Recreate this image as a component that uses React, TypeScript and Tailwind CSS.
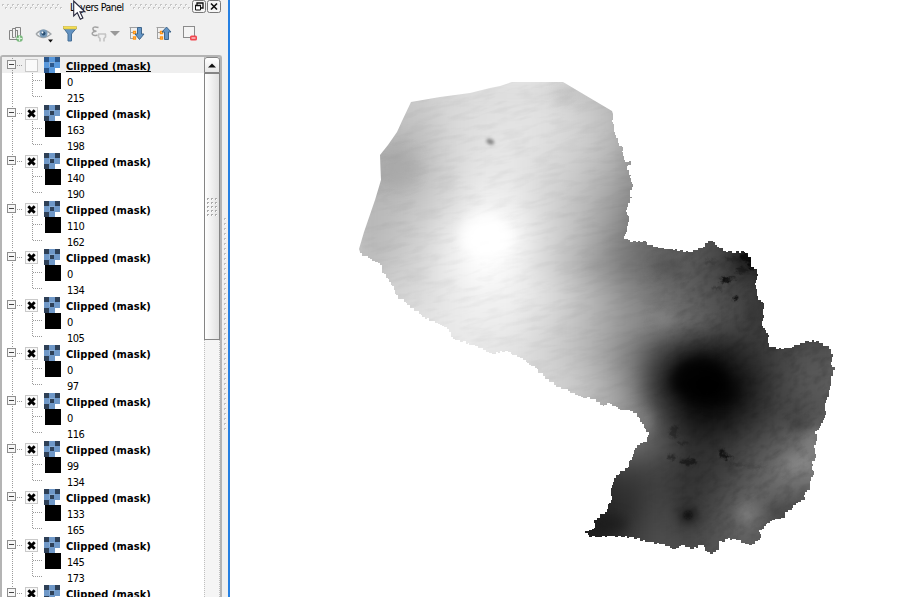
import React from "react";

const layers: [number, number][] = [
  [0, 215], [163, 198], [140, 190], [110, 162], [0, 134], [0, 105],
  [0, 97], [0, 116], [99, 134], [133, 165], [145, 173],
];

// Elevation samples, 30px apart, starting at (360, 85).
const terrain: number[][] = [
  [200, 200, 205, 214, 219, 221, 218, 198, 186, 170, 150, 130, 100, 80, 70, 70, 70],
  [195, 195, 199, 216, 223, 226, 226, 215, 196, 172, 150, 130, 100, 80, 70, 70, 70],
  [180, 176, 188, 214, 226, 230, 224, 212, 195, 163, 140, 120, 100, 80, 70, 70, 70],
  [172, 168, 186, 213, 231, 232, 219, 205, 184, 152, 130, 110, 90, 80, 70, 70, 70],
  [183, 187, 199, 218, 242, 240, 219, 198, 172, 137, 112, 100, 85, 60, 60, 60, 60],
  [181, 190, 208, 235, 255, 255, 224, 197, 162, 122, 100, 92, 76, 40, 40, 60, 60],
  [185, 198, 214, 238, 255, 248, 220, 188, 150, 116, 96, 88, 68, 38, 30, 60, 60],
  [203, 210, 217, 232, 243, 241, 228, 204, 173, 140, 114, 98, 78, 68, 52, 40, 60],
  [218, 220, 226, 233, 237, 235, 220, 198, 173, 146, 126, 104, 80, 66, 58, 58, 60],
  [218, 218, 223, 228, 231, 226, 214, 196, 168, 126, 64, 24, 20, 46, 67, 86, 82],
  [218, 218, 223, 228, 231, 226, 214, 206, 182, 137, 36, 0, 0, 26, 68, 90, 92],
  [210, 210, 210, 210, 210, 210, 208, 195, 174, 156, 70, 16, 14, 40, 68, 76, 90],
  [180, 180, 180, 180, 160, 150, 140, 120, 100, 110, 88, 46, 48, 72, 94, 128, 130],
  [60, 60, 60, 60, 60, 60, 60, 60, 54, 57, 64, 50, 60, 85, 120, 127, 120],
  [40, 40, 40, 40, 40, 40, 40, 40, 38, 45, 71, 48, 76, 108, 84, 76, 80],
  [30, 30, 30, 30, 30, 30, 30, 30, 30, 58, 78, 67, 85, 103, 75, 70, 70],
  [40, 40, 40, 40, 40, 40, 40, 40, 40, 70, 80, 80, 85, 90, 75, 70, 70],
];

const smoothEdge = "359,249 364,232 375,200 381,180 380,155 388,145 397,132 402,121 411,102 440,97 470,93 490,88 500,86 512,82 563,82 590,98 612,111";
const roughEdge =
  "613,114 612,122 615,135 616,138 619,146 622,147 623,156 625,162 629,161 631,165 627,169 631,176 632,190 630,197 632,198 628,207 626,212 629,222 627,229 624,239 630,242 643,241 647,245 658,248 670,249 688,252 693,250 702,248 708,241 713,240 717,247 726,252 744,252 751,260 751,267 757,271 757,280 755,285 758,300 763,303 763,315 763,328 768,335 769,347 776,349 790,348 800,343 812,340 822,343 831,350 833,357 831,365 835,370 831,378 830,390 825,408 825,418 820,428 815,434 817,441 814,448 816,458 812,464 814,475 810,483 810,490 804,497 805,500 796,505 792,510 785,513 785,518 775,520 767,524 764,529 759,532 760,540 752,545 745,543 741,540 728,539 719,544 719,550 713,554 707,551 704,545 694,549 685,545 676,549 665,544 650,542 632,537 610,536 590,537 585,531 594,528 594,520 605,512 611,500 612,485 616,475 628,467 632,457 634,450 640,443 647,440 649,432 642,422 637,413 630,410 622,410 610,403 604,406 600,402 590,397 583,397 570,391 556,385 545,376 537,368 520,357 508,351 492,353 475,345 455,339 447,327 425,317 410,305 396,294 391,282 382,270 382,265 372,259 360,252";

// Breaks the border into small pixel steps, as the raster cells do.
function roughen(list: string) {
  const pts = list.split(" ").map((p) => p.split(",").map(Number));
  const out: string[] = [];
  let prev = pts[0];
  const step = (x: number, y: number) => {
    out.push(`${x},${prev[1]}`, `${x},${y}`);
    prev = [x, y];
  };
  pts.forEach(([x, y], i) => {
    step(x, y);
    const next = pts[i + 1];
    if (!next) return;
    const dx = next[0] - x;
    const dy = next[1] - y;
    const n = Math.floor(Math.hypot(dx, dy) / 2.6);
    for (let k = 1; k < n; k++) {
      const a = Math.sin(i * 12.9 + k * 7.3) * 0.9;
      const b = Math.cos(i * 5.7 + k * 9.1) * 0.9;
      step(Math.round(x + (dx * k) / n + a), Math.round(y + (dy * k) / n + b));
    }
  });
  return out.join(" ");
}

const outline = `${smoothEdge} ${roughen(roughEdge)}`;

// cx, cy, rx, ry, gray, opacity
const softSpots: number[][] = [
  [486, 237, 26, 24, 255, 0.9], [400, 167, 18, 20, 163, 0.4], [566, 95, 9, 6, 180, 0.5],
  [699, 379, 28, 21, 0, 0.8], [722, 393, 18, 14, 0, 0.5], [664, 319, 10, 5, 155, 0.5],
  [799, 424, 9, 7, 42, 0.55], [744, 261, 12, 7, 20, 0.65], [610, 524, 18, 9, 22, 0.6],
  [647, 421, 5, 12, 155, 0.5], [780, 512, 10, 5, 50, 0.5], [668, 267, 15, 7, 78, 0.5],
  [753, 312, 6, 16, 40, 0.5], [690, 318, 30, 2, 125, 0.4], [812, 440, 5, 8, 145, 0.6],
  [796, 463, 15, 6, 160, 0.45], [747, 514, 9, 9, 155, 0.5], [688, 516, 7, 6, 0, 0.9],
];
const darkMarks: number[][] = [
  [725, 280, 4, 3, 10, 0.9], [732, 278, 4, 1.5, 20, 0.7],
  [735, 298, 2.5, 2, 5, 0.9], [746, 257, 6, 4, 5, 0.8], [742, 270, 6, 3, 18, 0.65],
  [733, 259, 8, 1.5, 30, 0.6], [722, 453, 3, 4, 10, 0.8], [727, 457, 4, 2, 8, 0.8],
  [689, 462, 9, 3, 10, 0.6], [671, 457, 4, 2, 15, 0.5], [712, 262, 8, 2, 55, 0.6],
  [755, 467, 9, 2, 65, 0.5], [674, 432, 4, 7, 15, 0.4], [683, 443, 6, 2, 20, 0.4],
  [717, 288, 6, 1.5, 35, 0.6], [736, 464, 8, 1.5, 40, 0.5], [751, 264, 3, 5, 0, 0.8],
];

const gray = (v: number) => `rgb(${v},${v},${v})`;

function ElevationMap() {
  return (
    <svg width="679" height="597" viewBox="230 0 679 597" className="block">
      <defs>
        <clipPath id="country">
          <polygon points={outline} shapeRendering="crispEdges" />
        </clipPath>
        <filter id="wide" filterUnits="userSpaceOnUse" x="280" y="10" width="640" height="640" colorInterpolationFilters="sRGB">
          <feGaussianBlur stdDeviation="13" />
        </filter>
        <filter id="spot" filterUnits="userSpaceOnUse" x="280" y="10" width="640" height="640" colorInterpolationFilters="sRGB">
          <feGaussianBlur stdDeviation="6" />
        </filter>
        <filter id="mark" filterUnits="userSpaceOnUse" x="280" y="10" width="640" height="640" colorInterpolationFilters="sRGB">
          <feGaussianBlur stdDeviation="1.3" result="b" />
          <feTurbulence type="fractalNoise" baseFrequency="0.25" numOctaves="2" seed="4" result="n" />
          <feDisplacementMap in="b" in2="n" scale="7" xChannelSelector="R" yChannelSelector="G" />
        </filter>
        <filter id="soft" x="-1" y="-1" width="3" height="3">
          <feGaussianBlur stdDeviation="1.5" />
        </filter>
        <filter id="relief" x="0" y="0" width="1" height="1" colorInterpolationFilters="sRGB">
          <feTurbulence type="fractalNoise" baseFrequency="0.04 0.18" numOctaves="3" seed="9" />
          <feColorMatrix values="0 0 0 0 0  0 0 0 0 0  0 0 0 0 0  1 0 0 0 -0.42" />
        </filter>
        <filter id="hills" filterUnits="userSpaceOnUse" x="480" y="180" width="520" height="440" colorInterpolationFilters="sRGB">
          <feGaussianBlur in="SourceAlpha" stdDeviation="18" result="area" />
          <feTurbulence type="fractalNoise" baseFrequency="0.09 0.16" numOctaves="4" seed="3" />
          <feColorMatrix values="0 0 0 0 0  0 0 0 0 0  0 0 0 0 0  2 0 0 0 -0.85" />
          <feComposite in2="area" operator="in" />
        </filter>
      </defs>
      <g clipPath="url(#country)">
        <g filter="url(#wide)">
          {terrain.map((row, j) =>
            row.map((v, i) => (
              <rect key={`${i}-${j}`} x={345 + i * 30} y={70 + j * 30} width="30.5" height="30.5" fill={gray(v)} shapeRendering="crispEdges" />
            )),
          )}
        </g>
        <g transform="rotate(-12 500 240)">
          <rect x="320" y="50" width="360" height="400" filter="url(#relief)" opacity="0.09" />
        </g>
        <g transform="rotate(-35 740 400)" opacity="0.16">
          <g filter="url(#hills)">
            <polygon transform="rotate(35 740 400)" points="650,245 760,245 860,340 850,480 720,560 660,500 690,380" />
          </g>
        </g>
        <g filter="url(#spot)">
          {softSpots.map(([cx, cy, rx, ry, v, o], i) => (
            <ellipse key={i} cx={cx} cy={cy} rx={rx} ry={ry} fill={gray(v)} opacity={o} />
          ))}
        </g>
        <ellipse cx="490.500" cy="141.500" rx="4" ry="2.800" transform="rotate(25 490 141)" fill="#888" filter="url(#soft)" />
        <circle cx="688" cy="515" r="4" fill="#080808" filter="url(#soft)" opacity=".6" />
        <g filter="url(#mark)">
          {darkMarks.map(([cx, cy, rx, ry, v, o], i) => (
            <ellipse key={i} cx={cx} cy={cy} rx={rx} ry={ry} fill={gray(v)} opacity={o} />
          ))}
        </g>
      </g>
    </svg>
  );
}

function Grip({ className }: { className: string }) {
  return (
    <svg className={className} height="7">
      <defs>
        <pattern id="grip" width="5" height="7" patternUnits="userSpaceOnUse">
          <path d="M0 1h2v1H1v1H0zM3 4h2v1H4v1H3z" fill="#c6c6c6" />
          <path d="M1 2h1v1H1zM4 5h1v1H4z" fill="#fff" />
        </pattern>
      </defs>
      <rect width="100%" height="7" fill="url(#grip)" />
    </svg>
  );
}

function TitleBar() {
  return (
    <div className="flex h-[15px] shrink-0 items-start pl-[2px]">
      <Grip className="mt-[3px] w-[60px]" />
      <span className="ml-[8px] w-[55px] whitespace-nowrap text-[10.5px] leading-[15px] tracking-[-0.5px]">Layers Panel</span>
      <Grip className="ml-[5px] mt-[3px] w-[60px]" />
      <svg className="ml-[2px]" width="30" height="14" fill="none">
        <rect x=".5" y=".5" width="13" height="12" rx="2" fill="#f6f6f6" stroke="#777" />
        <path d="M5 5V3h6v5H9" stroke="#111" strokeWidth="1.3" />
        <path d="M3.5 5.5h5v4.5h-5z" fill="#fff" stroke="#111" />
        <path d="M3 5.5h6" stroke="#111" strokeWidth="1.5" />
        <rect x="15.5" y=".5" width="13" height="12" rx="2" fill="#f6f6f6" stroke="#777" />
        <path d="M19 3.5l6 6m0-6l-6 6" stroke="#111" strokeWidth="1.6" />
      </svg>
    </div>
  );
}

function SortIcon({ up }: { up?: boolean }) {
  return (
    <svg width="16" height="16" viewBox="0 0 16 16" fill="none">
      <path d="M.5 1.500h8M1.500 2v11M1.500 6.500h3M1.500 12.500h3" stroke="#a0a0a0" />
      <path d="M4.500 5.500h2v2h-2zM4.500 11h2v2h-2z" fill="#fff" stroke="#ff9514" strokeWidth="1.3" />
      <path
        d={up ? "M10.500 1L15 6h-2.500v7.500h-4V6H6z" : "M8.500 1.500h4V8H15l-4.500 5.500L6 8h2.500z"}
        fill="#6495c5" stroke="#345b82" strokeWidth=".9"
      />
    </svg>
  );
}

function Toolbar() {
  return (
    <div className="flex h-[40px] shrink-0 items-start pl-[8px] pt-[11px]">
      <svg width="16" height="17" fill="none">
        <path d="M4.500 4.500h-3v9h8v-9h-2M6.500 11.500h-2v-9h3M7.500 11.500v-10h5v8M9.500 4v6" stroke="#858585" />
        <path d="M11.500 9.500v6M8.500 12.500h6" stroke="#58a85e" strokeWidth="4" />
        <path d="M11.500 10v5M9 12.500h5" stroke="#d9f0d9" strokeWidth="1.5" />
      </svg>
      <svg className="ml-[11px]" width="20" height="19">
        <path d="M1 8Q8 .5 16 8Q8 15 1 8" fill="#f7f9fa" stroke="#a1a6aa" strokeWidth="1.3" />
        <circle cx="8.500" cy="7.500" r="4" fill="#7799b8" />
        <circle cx="8.500" cy="7.500" r="2" fill="#294f73" />
        <circle cx="7.500" cy="6.500" r=".9" fill="#fff" />
        <path d="M13 13.500h5l-2.500 3z" fill="#111" />
      </svg>
      <svg className="ml-[8px]" width="15" height="17">
        <path d="M.5 2h13l-5 6v7H5V8z" fill="#6292c1" stroke="#456e96" />
        <rect x=".5" y=".5" width="13" height="2.500" fill="#f5df52" stroke="#cbb63e" strokeWidth=".6" />
      </svg>
      <svg className="ml-[13px]" width="16" height="17" fill="none">
        <path d="M7.500 1.500Q1.500 0 2 3Q2 5.200 5.500 5.200Q1 5.500 1.200 8Q2.500 10.500 6.500 9" stroke="#a2a2a2" strokeWidth="1.5" />
        <path d="M7.500 8v3l1.500 1.500v3M14.500 8v3L13 12.500v3M7 8h8" stroke="#c3c3c3" strokeWidth="1.600" />
      </svg>
      <svg className="ml-[3px] mt-[5px]" width="10" height="6"><path d="M0 0h10L5 5z" fill="#999" /></svg>
      <div className="ml-[9px]"><SortIcon /></div>
      <div className="ml-[11px]"><SortIcon up /></div>
      <svg className="ml-[10px]" width="16" height="17">
        <rect x="1.500" y=".5" width="11" height="11" fill="#f4f4f4" stroke="#8b8b8b" />
        <rect x="8" y="9.500" width="7" height="5" rx="1.500" fill="#f04850" />
        <path d="M9.500 12h4" stroke="#fff" />
      </svg>
    </div>
  );
}

function RasterIcon({ bright }: { bright: boolean }) {
  const d = bright ? "#2b578c" : "#2e4057";
  const b = bright ? "#5898dc" : "#6f98c8";
  return (
    <svg width="16" height="16" shapeRendering="crispEdges">
      <rect width="16" height="16" fill={b} />
      <path d={"M0 0h5v5H0zM11 0h5v5h-5zM6 6h4v4H6zM0 11h5v5H0z"} fill={d} />
      <path d="M5 5h6v1H6v4H5z" fill="#8aaed6" />
      <path d="M11 11h5v5h-5z" fill="#fff" />
    </svg>
  );
}

function LayerHeader({ first }: { first: boolean }) {
  return (
    <div className={`flex h-[16px] shrink-0 ${first ? "bg-[#efefef]" : ""}`}>
      <svg width="22" height="16" fill="none" shapeRendering="crispEdges">
        <path d="M10.500 1v15" stroke="#9b9b9b" strokeDasharray="1 1" />
        <path d="M15 8.500h6" stroke="#9b9b9b" strokeDasharray="1 1" />
        <rect x="5.500" y="3.500" width="8" height="8" fill="#f7f7f7" stroke="#8e8e8e" />
        <path d="M7 7.500h5" stroke="#444" />
      </svg>
      <svg className="ml-px" width="13" height="16" fill="none">
        <rect x=".5" y="2.500" width="12" height="12" fill="#fafafa" stroke="#c9c9c9" />
        {!first && <path d="M3.300 5.200l6.400 6.600M9.700 5.200l-6.400 6.600" stroke="#000" strokeWidth="2.800" />}
      </svg>
      <div className="ml-[6px]"><RasterIcon bright={first} /></div>
      <span className={`ml-[6px] mt-[2px] whitespace-nowrap text-[11px] font-bold leading-[16px] tracking-[0.07px] ${first ? "underline underline-offset-1" : ""}`}>Clipped (mask)</span>
    </div>
  );
}

function LayerGroup({ min, max, first }: { min: number; max: number; first: boolean }) {
  return (
    <div className="h-[48px] shrink-0">
      <LayerHeader first={first} />
      <div className="flex h-[32px]">
        <svg width="43" height="32" fill="none" shapeRendering="crispEdges">
          <path d="M10.500 0v32M30.500 0v24M31 7.500h9M31 23.500h9" stroke="#9b9b9b" strokeDasharray="1 1" />
        </svg>
        <div className="h-[16px] w-[16px] bg-black" />
        <div className="ml-[6px] mt-[2px] text-[11px] leading-[16px] tracking-[-0.5px]">
          <div>{min}</div>
          <div>{max}</div>
        </div>
      </div>
    </div>
  );
}

function Scrollbar() {
  return (
    <div className="flex w-[16px] shrink-0 flex-col border-x border-dotted border-[#c0c0c0] bg-[#f5f5f5]">
      <div className="-mx-px flex h-[16px] shrink-0 items-center justify-center rounded-t-[3px] border border-[#858585] bg-gradient-to-b from-white to-[#e7e7e7]">
        <svg width="8" height="5"><path d="M0 4.500L4 .5l4 4z" fill="#111" /></svg>
      </div>
      <div className="-mx-px h-[267px] shrink-0 border border-[#858585] bg-gradient-to-r from-white to-[#e1e1e1] pl-[2px] pt-[124px]">
        <svg width="12" height="20" shapeRendering="crispEdges">
          {[0, 1, 2, 3, 4].flatMap((r) => [0, 1, 2].map((c) => (
            <g key={`${r}${c}`} transform={`translate(${c * 4} ${r * 4})`}>
              <path d="M0 0h2v1H1v1H0z" fill="#aaa" /><path d="M1 1h1v1H1z" fill="#fff" />
            </g>
          )))}
        </svg>
      </div>
    </div>
  );
}

export default function App() {
  return (
    <div className="relative flex h-[597px] w-[909px] overflow-hidden bg-white text-black [font-family:'DejaVu_Sans_Condensed','DejaVu_Sans',sans-serif] [font-stretch:condensed]">
      <aside className="flex h-full w-[228px] shrink-0 bg-[#f0f0f0]">
        <div className="flex w-[222px] shrink-0 flex-col">
          <TitleBar />
          <Toolbar />
          <div className="flex min-h-0 flex-1 rounded-t-[3px] border-2 border-b-0 border-[#b4b4b4] bg-white">
            <div className="min-w-0 flex-1 overflow-hidden">
              {layers.map(([min, max], i) => <LayerGroup key={i} min={min} max={max} first={i === 0} />)}
              <LayerHeader first={false} />
            </div>
            <Scrollbar />
          </div>
        </div>
        <svg className="ml-[2px] mt-[218px]" width="3" height="212" shapeRendering="crispEdges">
          {Array.from({ length: 43 }, (_, i) => (
            <g key={i} transform={`translate(0 ${i * 5})`}>
              <path d="M0 0h2v1H1v1H0z" fill="#c0c0c0" /><path d="M1 1h1v1H1z" fill="#fff" />
            </g>
          ))}
        </svg>
      </aside>
      <div className="w-[2px] shrink-0 bg-[#2580e3]" />
      <main className="flex-1"><ElevationMap /></main>
      <svg className="absolute left-[73px] top-0" width="13" height="21" viewBox="0 0 13 21">
        <path d="M.7 1v15l3.600-3.300 3 6.500 2.600-1.200-3-6.200h5z" fill="#fff" stroke="#26263a" strokeWidth="1.100" />
      </svg>
    </div>
  );
}
